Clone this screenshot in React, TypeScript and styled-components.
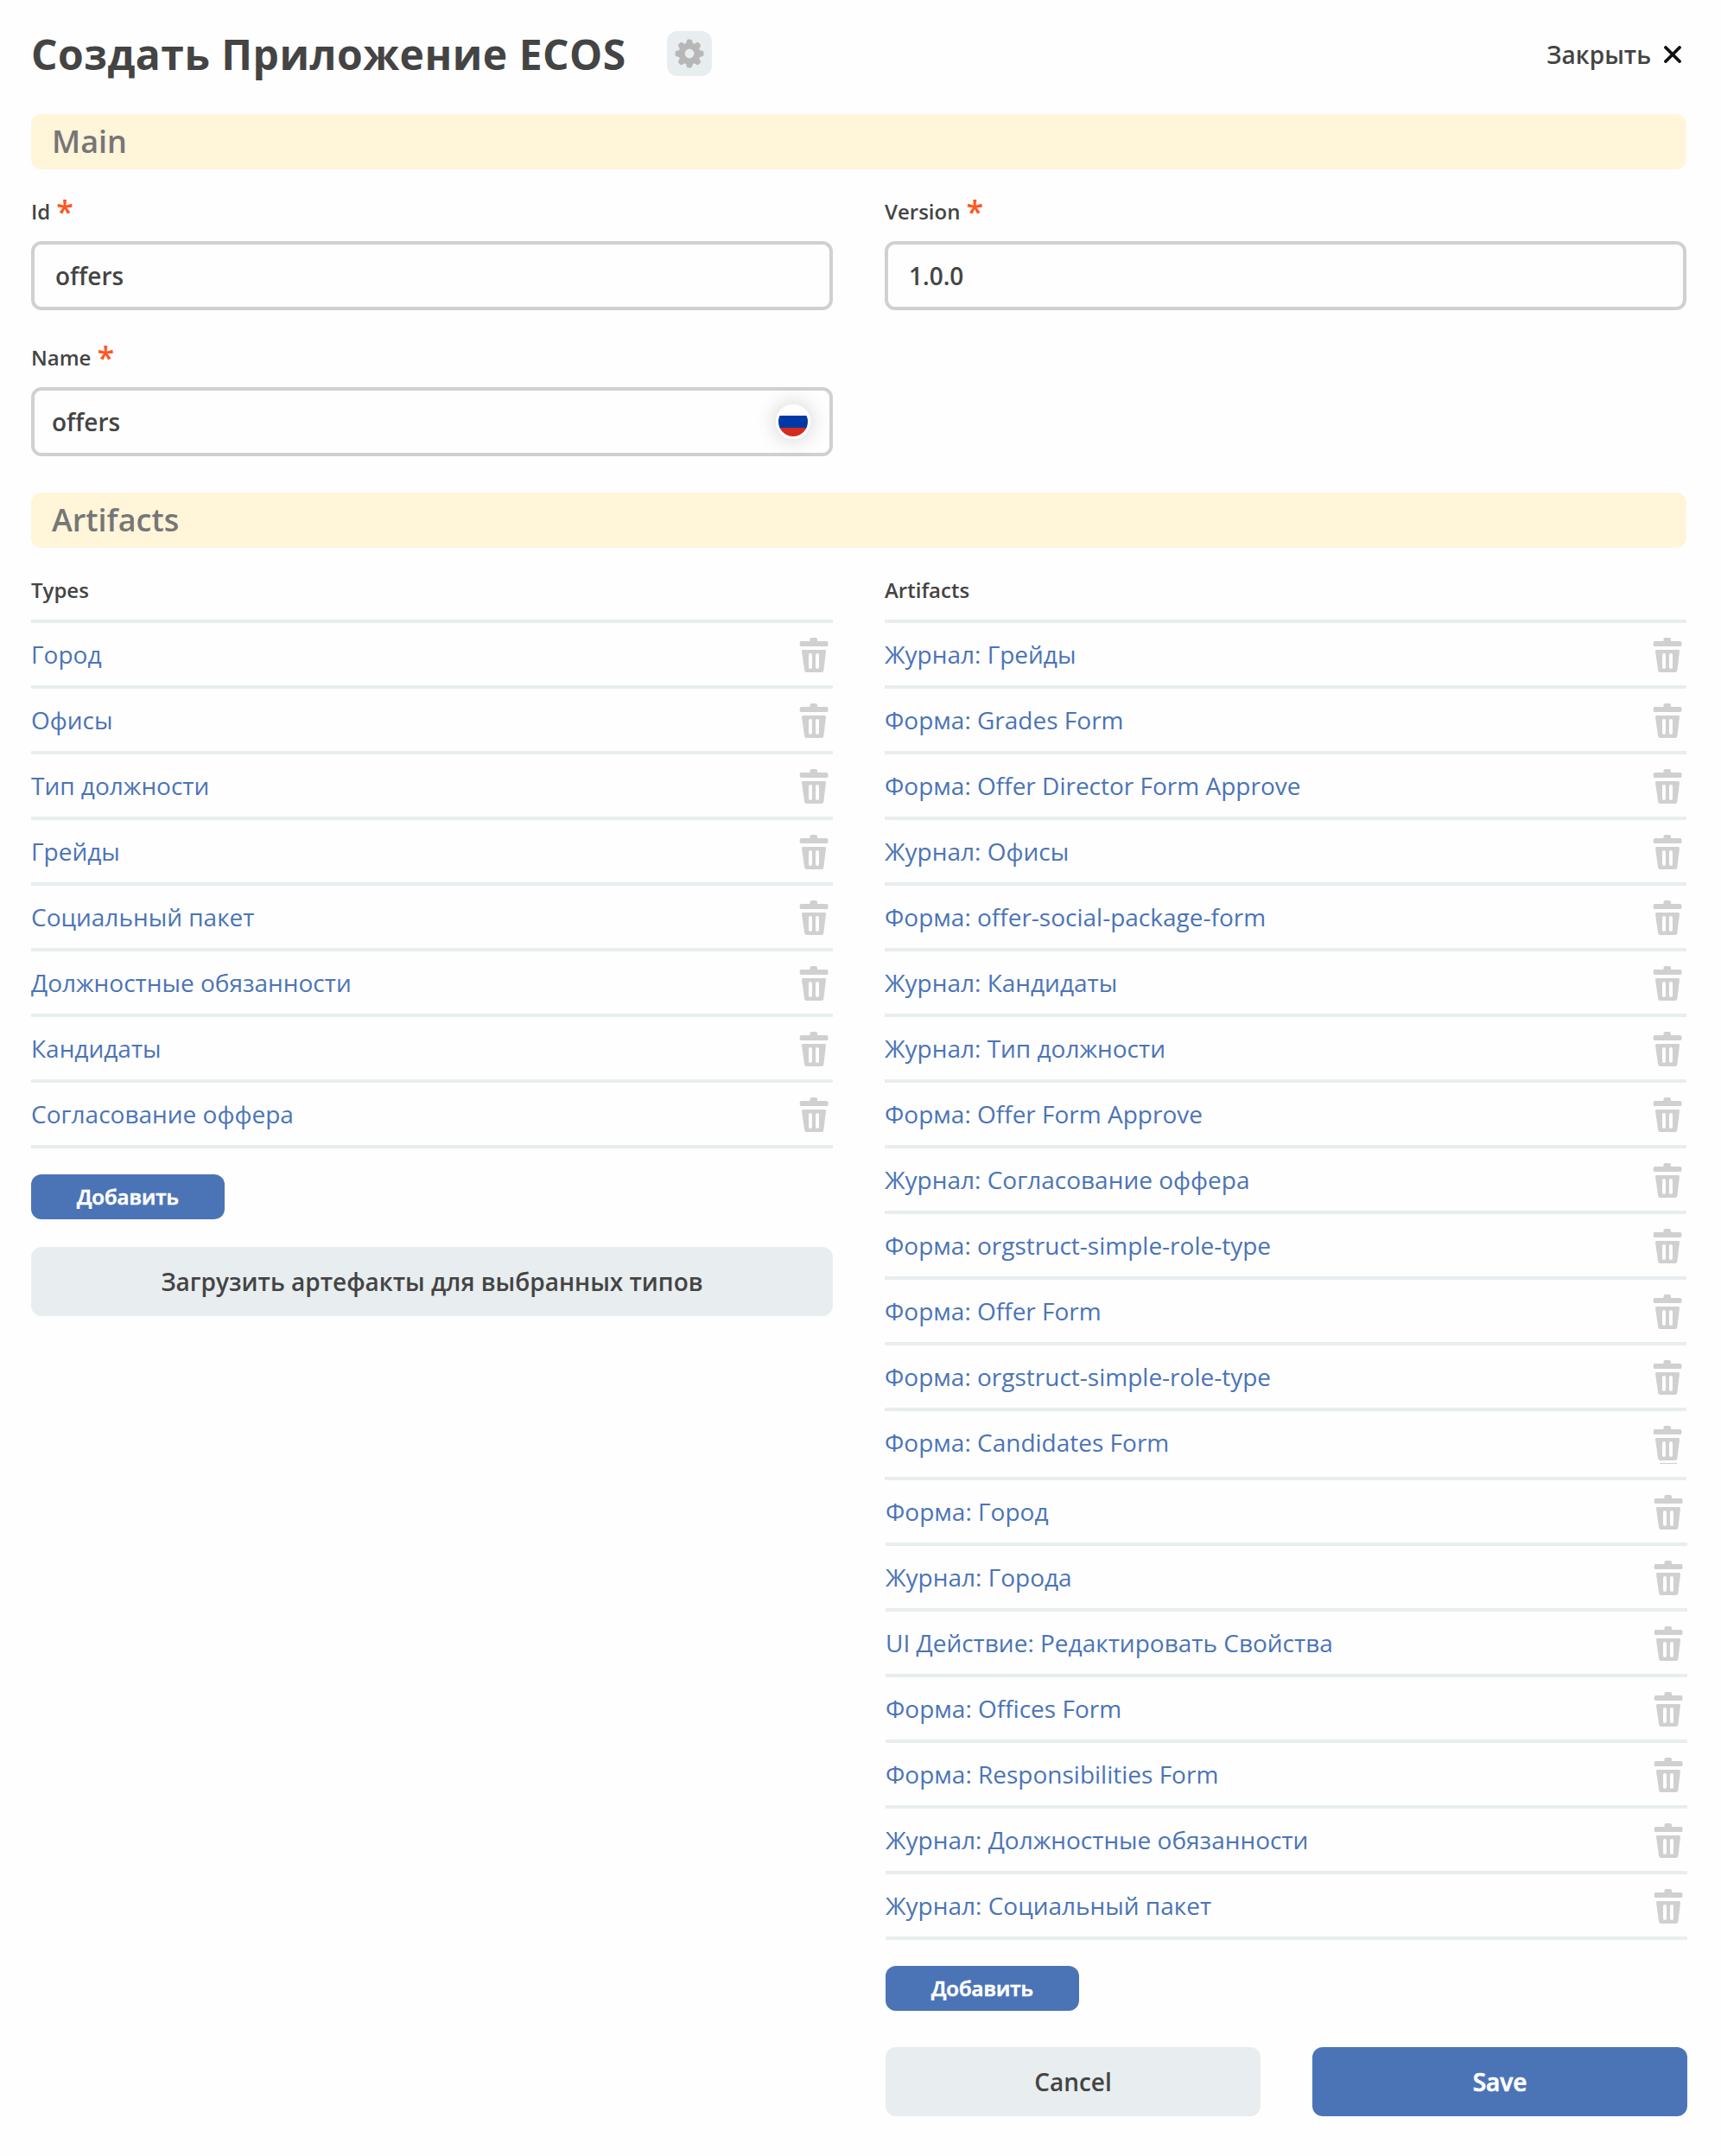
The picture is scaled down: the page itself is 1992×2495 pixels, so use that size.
import React from "react";
import styled, { createGlobalStyle } from "styled-components";

const GlobalStyle = createGlobalStyle`
  *, *::before, *::after { box-sizing: border-box; }
  body { margin: 0; background: #fefefe; }
`;

const Dialog = styled.main`
  width: 1992px;
  height: 2495px;
  padding: 36px 40px 0 36px;
  font-family: "Open Sans", "Noto Sans", sans-serif;
  color: #444;
  overflow: hidden;
`;

const Header = styled.header`
  display: flex;
  align-items: flex-start;
  height: 96px;
`;

const Title = styled.h1`
  margin: -6px 0 0;
  width: 736px;
  font-size: 48px;
  line-height: 66px;
  font-weight: 700;
  letter-spacing: 0.5px;
  white-space: nowrap;
`;

const SettingsButton = styled.button`
  display: grid;
  place-items: center;
  width: 52px;
  height: 52px;
  padding: 0 1px 1px 0;
  border: 0;
  border-radius: 12px;
  background: #e8edef;
`;

const CloseButton = styled.button`
  display: flex;
  align-items: center;
  gap: 15px;
  margin-left: auto;
  padding: 0 6px 0 0;
  border: 0;
  background: none;
  color: inherit;
  font: 600 28px/54px "Open Sans", "Noto Sans", sans-serif;
`;

const Section = styled.h2`
  margin: 0;
  height: 64px;
  padding-left: 24px;
  border-radius: 12px;
  background: #fff5d9;
  color: #767676;
  font-size: 36px;
  line-height: 63px;
  font-weight: 600;
`;

const Columns = styled.div`
  display: grid;
  grid-template-columns: 928px 928px;
  column-gap: 60px;
`;

const Fields = styled(Columns)`
  padding-top: 28px;
  row-gap: 34px;
  height: 374px;
  align-content: start;
`;

const Label = styled.div`
  display: flex;
  height: 55px;
  font-size: 24px;
  line-height: 42px;
  font-weight: 600;
`;

const Required = styled.span`
  margin-left: 7px;
  color: #ff5722;
  font-size: 36px;
  line-height: 42px;
`;

const InputBox = styled.div<{ $inset: number }>`
  display: flex;
  align-items: center;
  justify-content: space-between;
  height: 80px;
  padding: 0 22px 0 ${(p) => p.$inset}px;
  border: 4px solid #d0d0d0;
  border-radius: 12px;
  font-size: 28px;
  line-height: 72px;
  font-weight: 600;
`;

const Flag = styled.span`
  width: 40px;
  height: 40px;
  border: 3px solid #fff;
  border-radius: 50%;
  background: linear-gradient(#fff 0 10px, #0039a6 10px 24px, #d52b1e 24px);
  box-shadow: 0 0 24px rgba(0, 0, 0, 0.2);
`;

const ListHeading = styled.div`
  height: 83px;
  padding-top: 28px;
  font-size: 24px;
  line-height: 42px;
  font-weight: 600;
`;

const List = styled.ul`
  margin: 0;
  padding: 0;
  border-top: 4px solid #e8edef;
  list-style: none;
`;

const LowerPart = styled.div`
  margin: 0 -1px 0 1px;
`;

const ListTail = styled.ul`
  margin: 0 -1px 0 1px;
  padding: 0;
  list-style: none;
`;

const Row = styled.li<{ $loose?: boolean }>`
  display: flex;
  align-items: flex-start;
  justify-content: space-between;
  height: ${(p) => (p.$loose ? 80 : 76)}px;
  padding: 16px 5px 0 0;
  border-bottom: 4px solid #e8edef;
  color: #4b74b7;
  font-size: 28px;
  line-height: 40px;
`;

const Remove = styled.span`
  display: flex;
  flex-direction: column;
  align-items: center;
  padding-top: 1px;
`;

const Sliver = styled.i`
  width: 20px;
  height: 1px;
  margin: 3px 0 0 2px;
  background: #d0d0d0;
`;

const Button = styled.button<{ $primary?: boolean }>`
  height: 80px;
  width: 100%;
  padding: 0 0 1px;
  border: 0;
  border-radius: 12px;
  background: ${(p) => (p.$primary ? "#4b74b7" : "#e8edef")};
  color: ${(p) => (p.$primary ? "#fff" : "#444")};
  font-family: inherit;
  font-size: 28px;
  font-weight: 600;
  -webkit-text-stroke: ${(p) => (p.$primary ? "0.7px #fff" : "0")};
`;

const AddButton = styled(Button)`
  display: block;
  width: 224px;
  height: 52px;
  margin: 30px 0 32px;
  padding: 0 0 2px;
  font-size: 24px;
`;

const Actions = styled.div`
  display: grid;
  grid-template-columns: 1fr 1fr;
  gap: 60px;
  margin-top: 42px;
`;

const types = ["Город", "Офисы", "Тип должности", "Грейды", "Социальный пакет", "Должностные обязанности", "Кандидаты", "Согласование оффера"];

const artifacts = [
  "Журнал: Грейды",
  "Форма: Grades Form",
  "Форма: Offer Director Form Approve",
  "Журнал: Офисы",
  "Форма: offer-social-package-form",
  "Журнал: Кандидаты",
  "Журнал: Тип должности",
  "Форма: Offer Form Approve",
  "Журнал: Согласование оффера",
  "Форма: orgstruct-simple-role-type",
  "Форма: Offer Form",
  "Форма: orgstruct-simple-role-type",
  "Форма: Candidates Form",
];

const moreArtifacts = [
  "Форма: Город",
  "Журнал: Города",
  "UI Действие: Редактировать Свойства",
  "Форма: Offices Form",
  "Форма: Responsibilities Form",
  "Журнал: Должностные обязанности",
  "Журнал: Социальный пакет",
];

const teeth = [0, 45, 90, 135, 180, 225, 270, 315];

const GearIcon = () => (
  <svg width="34" height="34" viewBox="-17 -17 34 34" fill="#b7b7b7">
    {teeth.map((a) => (
      <path key={a} transform={`rotate(${a})`} d="M-5-10.500Q-3.600-12-3.200-14.500Q-3-16.500-1.200-16.500H1.200Q3-16.500 3.200-14.500Q3.600-12 5-10.500Z" />
    ))}
    <circle r="8.9" fill="none" stroke="#b7b7b7" strokeWidth="7" />
  </svg>
);

const CloseIcon = () => (
  <svg width="20" height="20" viewBox="0 0 20 20" stroke="#111" strokeWidth="3.8" strokeLinecap="round">
    <path d="M2 2l16 16M18 2l-16 16" />
  </svg>
);

const TrashIcon = () => (
  <svg width="34" height="40" viewBox="0 0 34 40" fill="#d0d0d0">
    <path d="M2.500 4H12.500V2Q12.500 0 14.500 0H19Q21 0 21 2V4H31.500Q33.500 4 33.500 6V8.500Q33.500 10 31.500 10H2.500Q.7 10 .7 8.500V6Q.7 4 2.500 4Z" />
    <path fillRule="evenodd" d="M4.500 14H29.500Q31.200 14 31 15.700L28.300 38Q28 40 26 40H8.500Q6.500 40 6.200 38L3 15.700Q2.800 14 4.500 14ZM13 18Q11 18 11 20V34Q11 36 13 36T15 34V20Q15 18 13 18ZM21 18Q19 18 19 20V34Q19 36 21 36T23 34V20Q23 18 21 18Z" />
  </svg>
);

type RowsProps = { items: string[]; looseLast?: boolean };

const Rows = ({ items, looseLast }: RowsProps) => (
  <>
    {items.map((name, i) => {
      const loose = looseLast && i === items.length - 1;
      return (
        <Row key={i} $loose={loose}>
          <span>{name}</span>
          <Remove>
            <TrashIcon />
            {loose && <Sliver />}
          </Remove>
        </Row>
      );
    })}
  </>
);

type FieldProps = { label: string; value: string; inset: number; flag?: boolean };

const Field = ({ label, value, inset, flag }: FieldProps) => (
  <div>
    <Label>
      {label}
      <Required>*</Required>
    </Label>
    <InputBox $inset={inset}>
      {value}
      {flag && <Flag />}
    </InputBox>
  </div>
);

export default function App() {
  return (
    <Dialog>
      <GlobalStyle />
      <Header>
        <Title>Создать Приложение ECOS</Title>
        <SettingsButton>
          <GearIcon />
        </SettingsButton>
        <CloseButton>
          Закрыть
          <CloseIcon />
        </CloseButton>
      </Header>
      <Section>Main</Section>
      <Fields>
        <Field label="Id" value="offers" inset={24} />
        <Field label="Version" value="1.0.0" inset={24} />
        <Field label="Name" value="offers" inset={20} flag />
      </Fields>
      <Section>Artifacts</Section>
      <Columns>
        <div>
          <ListHeading>Types</ListHeading>
          <List>
            <Rows items={types} />
          </List>
          <AddButton $primary>Добавить</AddButton>
          <Button>Загрузить артефакты для выбранных типов</Button>
        </div>
        <div>
          <ListHeading>Artifacts</ListHeading>
          <List>
            <Rows items={artifacts} looseLast />
          </List>
          <ListTail>
            <Rows items={moreArtifacts} />
          </ListTail>
          <LowerPart>
            <AddButton $primary>Добавить</AddButton>
            <Actions>
              <Button>Cancel</Button>
              <Button $primary>Save</Button>
            </Actions>
          </LowerPart>
        </div>
      </Columns>
    </Dialog>
  );
}
